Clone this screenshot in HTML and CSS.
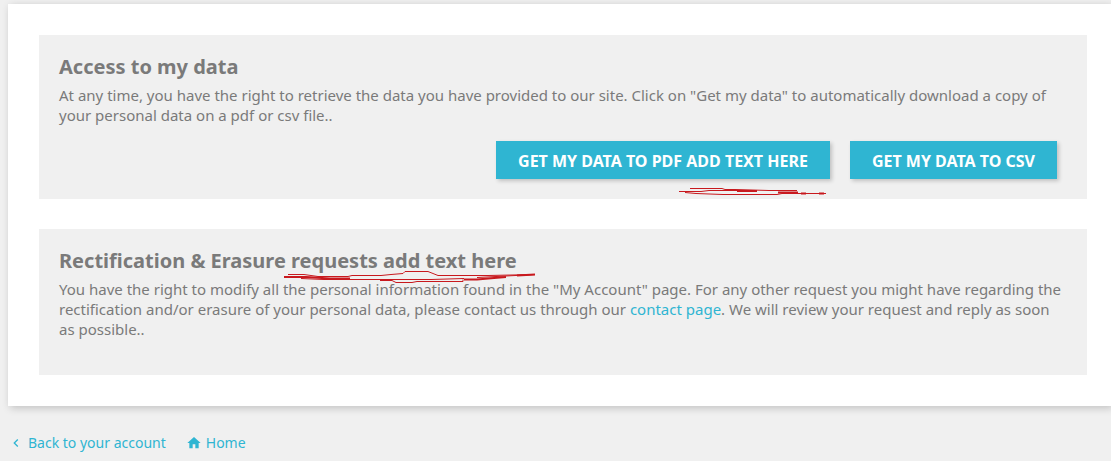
FILE: index.html
```
<!DOCTYPE html>
<html lang="en">

<head>
    <meta charset="UTF-8">
    <meta name="viewport" content="width=device-width, initial-scale=1.0">
    <title>GDPR - Personal data</title>
    <link rel="stylesheet" href="styles.css">
</head>

<body>

    <main class="page-content">
        <section class="data-box">
            <h2>Access to my data</h2>
            <p>At any time, you have the right to retrieve the data you have provided to our site. Click on "Get my data" to automatically download a copy of your personal data on a pdf or csv file..</p>
            <div class="data-buttons">
                <button type="button" class="btn-primary marked">
                    Get my data to PDF add text here
                    <svg class="mark mark-button" width="148" height="8" viewBox="0 0 148 8" aria-hidden="true">
                        <path d="M11 .5H43L46 1.500H56L90 2.500H118M0 3.500H22L30 2.500H70M6 4.500L17 5.500L44 6.500H98L103 5.500H147" />
                        <path class="thick" d="M58 3H78M99 4.500H119M122 5.500H127M140 5.500H145" />
                    </svg>
                </button>
                <button type="button" class="btn-primary">Get my data to CSV</button>
            </div>
        </section>

        <section class="data-box">
            <h2>
                Rectification &amp; Erasure
                <span class="marked">requests add text here
                    <svg class="mark mark-title" width="252" height="13" viewBox="0 0 252 13" aria-hidden="true">
                        <path d="M4 3.500H20L34 5.500H64L68 4.500H97L107 3.500L119 2.500L121 .5H144L154 4.500H204L251 3.500M17 7.500L40 8.500H147L180 7.500M96 9.500H108L112 11.500H128L133 10.500H179V8.500M193 6.500L251 3.500" />
                        <path class="thick" d="M0 6H22L46 7.500H66M180 8.500H193L210 7L222 6M233 4.500L251 3.500" />
                    </svg>
                </span>
            </h2>
            <p>You have the right to modify all the personal information found in the "My Account" page. For any other request you might have regarding the rectification and/or erasure of your personal data, please contact us through our <a href="#">contact page</a>. We will review your request and reply as soon as possible..</p>
        </section>
    </main>

    <footer class="page-footer">
        <a href="#" class="account-link">
            <svg width="16" height="16" viewBox="0 0 24 24" aria-hidden="true"><path d="M15.410 7.410L14 6l-6 6 6 6 1.410-1.410L10.830 12z" /></svg>
            <span>Back to your account</span>
        </a>
        <a href="#" class="account-link">
            <svg width="16" height="16" viewBox="0 0 24 24" aria-hidden="true"><path d="M10 20v-6h4v6h5v-8h3L12 3 2 12h3v8z" /></svg>
            <span>Home</span>
        </a>
    </footer>

</body>

</html>
```
FILE: styles.css
```
* {
    box-sizing: border-box;
}

body {
    font-family: "Noto Sans", sans-serif;
    font-size: 15px;
    line-height: 20px;
    margin: 0;
    padding: 4px 0 0 8px;
    background-color: #f0f0f0;
    color: #7a7a7a;
}

a {
    color: #2fb5d2;
    text-decoration: none;
}

.page-content {
    background-color: #fff;
    box-shadow: 2px 2px 8px rgba(0, 0, 0, 0.2);
    padding: 31px 24px 31px 31px;
}

.data-box {
    background-color: #f0f0f0;
    padding: 20px 20px 36px;
}

.data-box + .data-box {
    margin-top: 30px;
}

.data-box:first-child {
    padding-bottom: 20px;
}

.data-box h2 {
    font-size: 20px;
    line-height: 24px;
    font-weight: 700;
    margin: 0 0 6px;
}

.data-box p {
    margin: 0;
}

.data-buttons {
    display: flex;
    flex-wrap: wrap;
    justify-content: flex-end;
    gap: 20px;
    margin-top: 16px;
    padding-right: 10px;
}

.btn-primary {
    background-color: #2fb5d2;
    color: #fff;
    border: none;
    box-shadow: 2px 2px 4px rgba(0, 0, 0, 0.2);
    font-family: inherit;
    font-size: 16px;
    line-height: 20px;
    font-weight: 700;
    text-transform: uppercase;
    padding: 10px 22px 8px;
    cursor: pointer;
}

.btn-primary:hover {
    background-color: #2592a9;
}

/* red pen marks */
.marked {
    position: relative;
}

.mark {
    position: absolute;
    fill: none;
    stroke: #c8191e;
    stroke-width: 1;
    pointer-events: none;
}

.mark .thick {
    stroke-width: 2;
}

.mark-button {
    top: 47px;
    right: 3px;
}

.mark-title {
    top: 24px;
    left: -7px;
}

.page-footer {
    display: flex;
    gap: 20px;
    padding: 27px 0 8px;
    font-size: 14px;
}

.account-link {
    display: flex;
    align-items: center;
    gap: 4px;
}

.account-link svg {
    fill: currentColor;
}
```
